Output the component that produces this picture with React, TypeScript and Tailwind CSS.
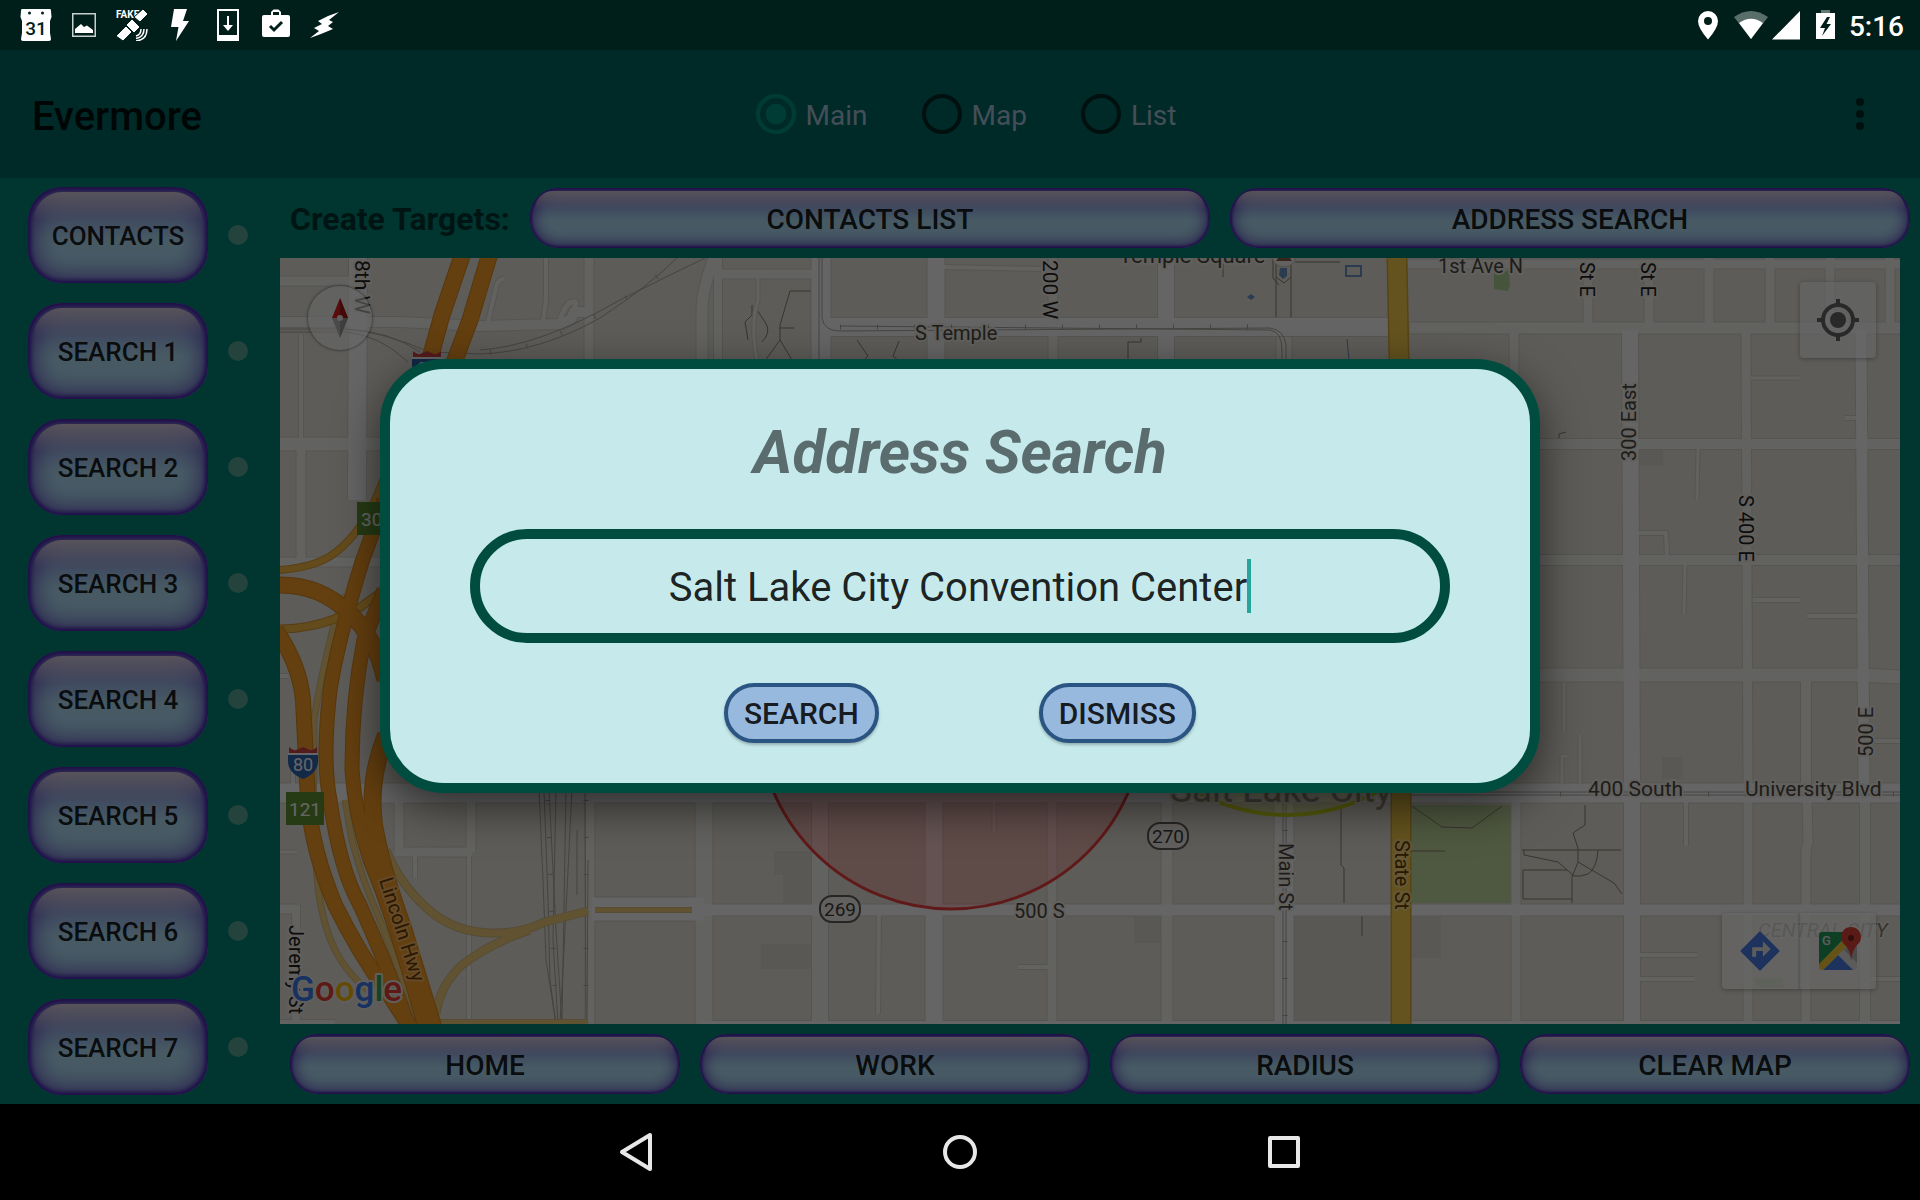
import React, { useState } from "react";

type Road = { d: string; w: number; major?: boolean };

const roads: Road[] = [
  // horizontal streets
  { d: "M280 281H352", w: 9 },
  { d: "M280 322H400L480 326L560 324Q572 322 574 312H586", w: 10 },
  { d: "M280 444H400", w: 13 },
  { d: "M280 562H420", w: 9 },
  { d: "M280 676H288", w: 4 },
  { d: "M280 852H297", w: 3 },
  { d: "M716 274H816", w: 9 },
  { d: "M940 267L1048 269", w: 4 },
  { d: "M1406 264H1900", w: 9 },
  { d: "M1410 328H1900", w: 11 },
  { d: "M1530 444H1900", w: 10 },
  { d: "M1530 560H1900", w: 10 },
  { d: "M1530 675H1860L1900 677", w: 13 },
  { d: "M1751 378H1799", w: 3 },
  { d: "M1845 418H1860", w: 4 },
  { d: "M1639 533H1666L1667 556", w: 4 },
  { d: "M1753 600H1800", w: 4 },
  { d: "M1807 616H1858", w: 4 },
  { d: "M1870 741H1900", w: 4 },
  { d: "M1638 955H1697", w: 4 },
  { d: "M1638 979H1695", w: 4 },
  { d: "M1864 979H1900", w: 4 },
  { d: "M1018 967H1050", w: 4 },
  { d: "M395 852H472", w: 9 },
  { d: "M280 1022H335", w: 4 },
  // vertical streets
  { d: "M301 335V438", w: 4 },
  { d: "M301 450V562", w: 9 },
  { d: "M399 800V852", w: 9 },
  { d: "M471 800V852", w: 9 },
  { d: "M469 852V1024", w: 4 },
  { d: "M415 852V878", w: 4 },
  { d: "M293 770V790", w: 4 },
  { d: "M296 905V1024", w: 8 },
  { d: "M280 909H298", w: 9 },
  { d: "M546 258V300L543 322", w: 4 },
  { d: "M504 279Q497 279 495 292L488 322", w: 4 },
  { d: "M560 320Q565 304 572 302Q580 300 573 310", w: 5 },
  { d: "M589 258V370", w: 9 },
  { d: "M718 258V380", w: 8 },
  { d: "M714 258Q702 290 702 310V370", w: 11 },
  { d: "M758 278V300Q750 325 757 360", w: 3 },
  { d: "M1053 258V370", w: 9 },
  { d: "M1284 337V370", w: 15 },
  { d: "M1588 269V326", w: 9 },
  { d: "M1649 269V326", w: 9 },
  { d: "M1709 258V326", w: 9 },
  { d: "M1770 258V326", w: 9 },
  { d: "M1830 258V326", w: 9 },
  { d: "M1890 258V326", w: 9 },
  { d: "M1514 333V375", w: 9 },
  { d: "M1746 330L1748 790", w: 9 },
  { d: "M1698 449L1697 500", w: 3 },
  { d: "M1685 565L1684 614", w: 3 },
  { d: "M1564 683V731", w: 3 },
  { d: "M1580 735V783", w: 3 },
  { d: "M1567 756H1562V783", w: 3 },
  { d: "M1806 680V783", w: 10 },
  { d: "M820 800V1024", w: 16 },
  { d: "M704 800V1024", w: 17 },
  { d: "M590 800V1024", w: 9 },
  { d: "M1052 800V1024", w: 9 },
  { d: "M1167 800V1024", w: 11 },
  { d: "M994 800V832", w: 3 },
  { d: "M879 910L878 1014", w: 4 },
  { d: "M1516 800V1024", w: 9 },
  { d: "M1686 800V846", w: 4 },
  { d: "M1748 800V1024", w: 9 },
  { d: "M1807 800L1808 842L1806 850V1024", w: 9 },
  { d: "M1865 800V1024", w: 10 },
  // arterials
  { d: "M358 258L357 500", w: 18, major: true },
  { d: "M821 258V370", w: 19, major: true },
  { d: "M936 258V370", w: 17, major: true },
  { d: "M1166 258V370", w: 16, major: true },
  { d: "M822 327H1398", w: 18, major: true },
  { d: "M280 793H1900", w: 19, major: true },
  { d: "M592 909H704", w: 23, major: true },
  { d: "M690 910H1900", w: 11, major: true },
  { d: "M700 1025H1900", w: 8, major: true },
  { d: "M934 800V1024", w: 17, major: true },
  { d: "M1284 800V1024", w: 19, major: true },
  { d: "M1630 330L1632 790V1024", w: 16, major: true },
  { d: "M1861 330L1864 790", w: 11, major: true },
];

const yellowRamps: Road[] = [
  { d: "M345 595L334 625Q320 680 314 720V775Q312 800 316 860Q318 915 335 950Q348 975 368 990", w: 5 },
  { d: "M345 800L352 840Q362 880 378 915L420 1024", w: 5 },
  { d: "M386 850Q400 885 430 911Q455 932 490 933Q520 934 545 922L588 911", w: 7 },
  { d: "M436 1014Q440 985 462 965Q490 943 530 930", w: 7 },
  { d: "M595 910H692", w: 4 },
  { d: "M438 1022H588", w: 4 },
];

const amberRamps: Road[] = [
  { d: "M280 570Q315 567 332 555Q365 532 384 478", w: 6 },
  { d: "M280 629Q310 629 340 617", w: 7 },
  { d: "M355 611L384 590", w: 7 },
];

const highways: Road[] = [
  { d: "M464 250L442 315L424 380", w: 15 },
  { d: "M491 250L470 320L440 400", w: 15 },
  { d: "M384 500Q374 530 362 562Q338 640 330 690Q322 760 330 800Q340 870 360 905Q385 960 408 1024", w: 13 },
  { d: "M280 585Q320 585 348 612Q375 635 385 680", w: 15 },
  { d: "M384 590L364 640Q352 700 352 770Q355 815 370 860Q395 920 420 1010L424 1024", w: 13 },
  { d: "M276 630Q300 665 303 700L308 800Q312 850 335 905Q360 955 386 990L412 1030", w: 14 },
  { d: "M386 735Q368 780 374 825Q382 870 402 925L433 1026", w: 16 },
];

const rails = [
  "M280 329H345Q390 331 420 352M280 332H345Q380 335 408 362M345 329Q380 331 430 352L480 354",
  "M480 354Q540 352 600 318Q650 285 677 258M480 350Q540 346 620 300Q680 270 705 258",
  "M819 258V370M822 258V318Q824 331 840 331L1270 328Q1284 330 1286 345V370M840 326L1270 330Q1282 332 1282 350V370",
  "M1283 800V1024M1286 800V1024M1400 792H1900M1400 795H1900",
  "M539 790L543 880L546 960L556 1024M544 790L548 900L550 980L556 1024M549 790L556 930L562 1024M556 790L553 940L558 1024M566 790L562 1020M572 790L564 950L560 1024M585 790L586 1024M588 860L587 1020M577 830V895",
];

const halo = "[paint-order:stroke] [stroke-width:4px] [stroke-linejoin:round]";

function RoadLayer({ items, casing, fill }: { items: Road[]; casing: string; fill: string }) {
  return (
    <g fill="none" strokeLinejoin="round">
      {items.map((r, i) => (
        <path key={`c${i}`} d={r.d} stroke={casing} strokeWidth={r.w + 2} />
      ))}
      {items.map((r, i) => (
        <path key={`f${i}`} d={r.d} stroke={r.major ? "#fdfdfd" : fill} strokeWidth={r.w} />
      ))}
    </g>
  );
}

function RouteBadge({ x, y, label }: { x: number; y: number; label: string }) {
  return (
    <g>
      <rect x={x - 20} y={y - 13} width="40" height="26" rx="12" fill="#f4f1ea" stroke="#5c5c5c" strokeWidth="2" />
      <text x={x} y={y + 7} textAnchor="middle" fontSize="19" fill="#3c3c3c">{label}</text>
    </g>
  );
}

function Shield({ x, y, label }: { x: number; y: number; label: string }) {
  return (
    <g transform={`translate(${x} ${y})`}>
      <path d="M1 0Q5 4 8 3L15 0L22 3Q25 4 29 0V6H1Z" fill="#d2454a" />
      <path d="M0 8H30V14Q30 26 15 32Q0 26 0 14Z" fill="#2f66b5" />
      <path d="M0 6H30V8H0Z" fill="#fff" />
      <text x="15" y="24" textAnchor="middle" fontSize="18" fill="#fff">{label}</text>
    </g>
  );
}

function CityMap() {
  return (
    <svg
      className="absolute inset-0 size-full font-['Roboto',sans-serif]"
      viewBox="280 258 1620 766"
      preserveAspectRatio="xMidYMid slice"
      role="img"
      aria-label="Map of Salt Lake City"
    >
      <rect x="280" y="258" width="1620" height="766" fill="#e9e5dc" />
      <g fill="#e1dcd1">
        <rect x="761" y="944" width="50" height="25" />
        <rect x="774" y="851" width="37" height="24" />
        <rect x="783" y="875" width="28" height="28" />
        <rect x="1134" y="915" width="27" height="28" />
        <rect x="1411" y="917" width="30" height="41" />
        <rect x="1639" y="450" width="24" height="16" />
        <rect x="1662" y="757" width="21" height="22" />
        <rect x="1294" y="916" width="96" height="104" />
      </g>
      <rect x="1410" y="805" width="101" height="98" fill="#c6dba0" />
      <path d="M1494 271H1509L1510 285L1508 291L1494 289Z" fill="#b0d294" />
      <rect x="1755" y="978" width="28" height="9" fill="#c6dba0" />
      <g fill="none" stroke="#8a8474" strokeWidth="1">
        <path d="M1412 806L1442 827L1472 828L1502 806M1411 851H1445" />
        <path d="M1585 805V825L1573 833L1578 848V862L1572 877V903M1522 850H1621M1524 850V855L1558 862L1574 876Q1580 877 1588 874Q1597 868 1598 850M1578 862L1614 883L1622 894M1523 870H1567M1523 870V899H1572" />
        <path d="M1276 260V317M1291 260V317M1276 277L1284 283L1291 277M1295 262H1340M1223 264V277M1273 258V278L1279 285" />
        <path d="M812 291H790L780 325V340L795 365M780 340L762 365M757 310L765 322Q772 332 762 342M752 305V315L745 322L748 340M780 328H794M755 345V365M857 340L868 356L858 366M899 341L893 356L905 366M1128 365V342H1141V338M1559 439V434L1566 432" />
        <path d="M1341 805V865L1344 868V903M1362 916V936" />
      </g>
      <rect x="1346" y="266" width="15" height="10" fill="none" stroke="#6d94c9" strokeWidth="2" />
      <path d="M1247 297L1251 294L1255 297L1251 300Z" fill="#6d94c9" />
      <path d="M1347 339L1349 360" stroke="#6d94c9" fill="none" />
      <path d="M1280 268H1287V276L1283 279L1279 275Z" fill="#6d94c9" />
      <RoadLayer items={roads} casing="#d8d3c8" fill="#f6f4f0" />
      <g fill="none" stroke="#aeaaa2" strokeWidth="1">
        {rails.map((d) => (
          <path key={d} d={d} />
        ))}
      </g>
      <g stroke="#aeaaa2" strokeWidth="5" fill="none" strokeDasharray="1 36">
        <path d="M840 327H1270M1560 794H1900M548 800L556 1024M586 800V1024M1285 830V1024M490 352Q560 350 677 262" />
      </g>
      <RoadLayer items={yellowRamps} casing="#d5bd86" fill="#f2cf7a" />
      <RoadLayer items={amberRamps} casing="#d99a35" fill="#fbbc48" />
      <RoadLayer items={highways} casing="#d98a20" fill="#f99d27" />
      <path d="M1397 258L1399 360L1401 800V1024" stroke="#d9a93a" strokeWidth="21" fill="none" />
      <path d="M1397 258L1399 360L1401 800V1024" stroke="#fbcf4c" strokeWidth="18" fill="none" />

      <circle cx="1287" cy="628" r="187" fill="#dfe62a" fillOpacity="0.25" stroke="#d5e01c" strokeWidth="4" />
      <circle cx="951" cy="716" r="193" fill="#f00" fillOpacity="0.18" stroke="#f04040" strokeWidth="3" />

      <g fontSize="20" fill="#4d4a44" stroke="#f3f0e9" className={halo}>
        <text x="915" y="340">S Temple</text>
        <text x="1438" y="273">1st Ave N</text>
        <text x="1588" y="796" fontSize="21">400 South</text>
        <text x="1745" y="796" fontSize="21">University Blvd</text>
        <text x="1014" y="918">500 S</text>
        <text x="1119" y="263" fontSize="22">Temple Square</text>
        <text transform="translate(1636 461) rotate(-90)">300 East</text>
        <text transform="translate(1873 757) rotate(-90)">500 E</text>
        <text transform="translate(1279 843) rotate(90)">Main St</text>
        <g fill="#222">
          <text transform="translate(1043 260) rotate(90)" fontSize="21">200 W</text>
          <text transform="translate(355 260) rotate(90)" fontSize="21">8th W</text>
          <text transform="translate(1580 262) rotate(90)">St E</text>
          <text transform="translate(1641 262) rotate(90)">St E</text>
          <text transform="translate(1739 495) rotate(90)">S 400 E</text>
          <text transform="translate(289 925) rotate(90)">Jeremy St</text>
        </g>
        <text transform="translate(1395 840) rotate(90)" fill="#6b3d00" stroke="#fbdc84">State St</text>
        <text transform="translate(379 880) rotate(72)" fill="#6b3d00" stroke="#fbb862">Lincoln Hwy</text>
        <text x="1758" y="937" fontStyle="italic" fill="#8a8270">CENTRAL CITY</text>
      </g>
      <text x="1170" y="802" fontSize="37" fill="#a0957c" stroke="#ece8df" className={halo}>Salt Lake City</text>
      <circle cx="1284" cy="255" r="12" fill="#f6f4f0" stroke="#cbc6bb" />
      <path d="M1276 261L1284 250L1292 261Z" fill="#8d5d4b" />
      <RouteBadge x={840} y={909} label="269" />
      <RouteBadge x={1168} y={836} label="270" />
      <Shield x={288} y={747} label="80" />
      <Shield x={412} y={351} label="80" />
      <g fontSize="19" fill="#fff">
        <rect x="286" y="792" width="38" height="33" fill="#5f9532" />
        <text x="289" y="816">121</text>
        <rect x="357" y="502" width="38" height="33" fill="#5f9532" />
        <text x="361" y="526">305</text>
      </g>
      <text x="291" y="1001" fontSize="35" fontWeight="500" stroke="#efece6" className={halo}>
        <tspan fill="#3b7cf0">G</tspan>
        <tspan fill="#e94235">o</tspan>
        <tspan fill="#fabb05">o</tspan>
        <tspan fill="#3b7cf0">g</tspan>
        <tspan fill="#34a853">l</tspan>
        <tspan fill="#e94235">e</tspan>
      </text>
    </svg>
  );
}

function GlossButton({ children, tall = false }: { children: React.ReactNode; tall?: boolean }) {
  const shape = tall
    ? "h-24 w-[180px] rounded-[34px] text-[26px] shadow-[inset_0_0_4px_3px_#4a1fb4,inset_0_0_20px_9px_rgba(88,62,185,0.7)] before:inset-x-[6px] before:top-[5px] before:h-[28px] before:rounded-t-[28px]"
    : "h-[60px] min-w-0 flex-1 rounded-[28px] text-[28px] shadow-[inset_0_0_3px_2px_#4a1fb4,inset_0_0_13px_6px_rgba(88,62,185,0.7)] before:inset-x-[5px] before:top-[3px] before:h-[18px] before:rounded-t-[22px]";
  return (
    <button
      type="button"
      className={`relative bg-linear-to-b from-[#98a8e8] from-25% via-[#b2e1fa] via-55% to-[#b2e1fa] pt-[3px] font-medium text-black/87 before:absolute before:bg-linear-to-b before:from-[#e6dde6]/90 before:to-[#9a9cd0]/0 before:content-[''] ${shape}`}
    >
      <span className="relative">{children}</span>
    </button>
  );
}

function StatusIcons() {
  return (
    <div className="flex items-center gap-4 text-white">
      <svg className="size-8" viewBox="0 0 32 32" fill="currentColor" aria-hidden="true">
        <path d="M2 0H30Q31 0 31 2L31.500 8L30 12V24L31 30Q31 32 29 32H3Q1 32 1 30L2 24V12L.5 8L1 2Q1 0 2 0Z" />
        <circle cx="9.500" cy="4" r="1.500" fill="#001f1a" />
        <circle cx="22.500" cy="4" r="1.500" fill="#001f1a" />
        <text x="16" y="26" fontSize="19" fontWeight="500" textAnchor="middle" fill="#001f1a">31</text>
      </svg>
      <svg className="size-8" viewBox="0 0 32 32" aria-hidden="true">
        <rect x="4.750" y="4.750" width="22.500" height="22.500" fill="none" stroke="#c8d0ce" strokeWidth="1.500" />
        <path d="M7 24V20L13 15L16 18L19 16.500L25 21V24Z" fill="currentColor" />
      </svg>
      <svg className="size-8" viewBox="0 0 32 32" fill="currentColor" aria-hidden="true">
        <text x="0" y="9" fontSize="10" fontWeight="700">FAKE</text>
        <path d="M18 8L27 0L32 5L24 13ZM10 16L16 10L24 18L18 24ZM0 27L10 17L16 23L7 32Z" stroke="#001f1a" strokeWidth="1" />
        <path d="M20 27Q25 26 25 20M20 29.500Q28 28 28 20M20 32Q31 31 31 20" fill="none" stroke="currentColor" strokeWidth="1.500" />
      </svg>
      <svg className="size-8" viewBox="0 0 32 32" fill="currentColor" aria-hidden="true">
        <path d="M10 0H23L19 12H25L12 32L14.500 18H7Z" />
      </svg>
      <svg className="size-8" viewBox="0 0 32 32" aria-hidden="true">
        <rect x="6" y="1" width="20" height="30" fill="none" stroke="currentColor" strokeWidth="2" />
        <path d="M6 26H26V31H6ZM15 7H17V16H21L16 22L11 16H15Z" fill="currentColor" />
      </svg>
      <svg className="size-8" viewBox="0 0 32 32" aria-hidden="true">
        <path d="M4 6H11V3L13.500 .5H18.500L21 3V6H28Q30 6 30 8V26Q30 28 28 28H4Q2 28 2 26V8Q2 6 4 6ZM13 6H19V3H13Z" fill="currentColor" fillRule="evenodd" />
        <path d="M10 17L14 21L22 13" fill="none" stroke="#001f1a" strokeWidth="3" />
      </svg>
      <svg className="size-8" viewBox="0 0 32 32" fill="currentColor" aria-hidden="true">
        <path d="M31 3L20 7L10 12L14 15L6 19L11 22L2 29L13 25L25 20L20 17L25 13L21 11Z" />
      </svg>
    </div>
  );
}

function StatusBar() {
  return (
    <div className="flex h-[50px] shrink-0 items-center justify-between bg-[#001f1a] pl-5 pr-4 text-white">
      <StatusIcons />
      <div className="flex items-center gap-1">
        <svg className="mr-3 h-[30px] w-5" viewBox="0 0 20 30" fill="currentColor" aria-hidden="true">
          <path fillRule="evenodd" d="M10 1A10 10 0 0 0 0 11Q0 18 10 29.500Q20 18 20 11A10 10 0 0 0 10 1ZM10 7A4 4 0 1 1 10 15A4 4 0 1 1 10 7Z" />
        </svg>
        <svg className="h-[30px] w-[34px]" viewBox="0 0 34 30" aria-hidden="true">
          <path d="M0 7Q17 -5 34 7L17 29Z" fill="#fff" fillOpacity="0.35" />
          <path d="M5 13Q17 4.500 29 13L17 29Z" fill="#fff" />
        </svg>
        <svg className="h-[30px] w-7" viewBox="0 0 28 30" fill="currentColor" aria-hidden="true">
          <path d="M0 29.500L28 1V29.500Z" />
        </svg>
        <svg className="ml-3 mr-[9px] h-[30px] w-5" viewBox="0 0 20 30" aria-hidden="true">
          <path d="M5 0H14V3H5Z" fill="#fff" fillOpacity="0.4" />
          <path d="M0 3H19V29H0ZM11 7L4 18H9L6 26L15 14H10.500L14 7Z" fill="#fff" fillRule="evenodd" />
        </svg>
        <time className="pt-[3px] text-[28px] font-medium leading-8">5:16</time>
      </div>
    </div>
  );
}

const views = ["Main", "Map", "List"];
const searches = ["CONTACTS", "SEARCH 1", "SEARCH 2", "SEARCH 3", "SEARCH 4", "SEARCH 5", "SEARCH 6", "SEARCH 7"];

function Header() {
  return (
    <header className="grid h-32 shrink-0 grid-cols-[1fr_auto_1fr] items-center bg-[#006962] pl-8 pr-5">
      <h1 className="pt-[6px] text-[40px] font-medium text-black/87">Evermore</h1>
      <div role="radiogroup" aria-label="View" className="flex gap-[54px]">
        {views.map((v) => (
          <label key={v} className="flex items-center gap-[10px] text-[28px] text-[#abc4dc]">
            <input
              type="radio"
              name="view"
              defaultChecked={v === "Main"}
              className="size-10 appearance-none rounded-full border-4 border-black/60 checked:border-[#009688] checked:bg-radial checked:from-[#009688] checked:from-45% checked:to-transparent checked:to-45%"
            />
            <span className="pt-[3px]">{v}</span>
          </label>
        ))}
      </div>
      <button type="button" aria-label="More options" className="flex h-20 w-20 items-center justify-center justify-self-end">
        <svg className="h-8 w-2" viewBox="0 0 8 32" fillOpacity="0.6" aria-hidden="true">
          <circle cx="4" cy="4" r="4" />
          <circle cx="4" cy="16" r="4" />
          <circle cx="4" cy="28" r="4" />
        </svg>
      </button>
    </header>
  );
}

function MapPanel() {
  return (
    <div className="relative mr-5 min-h-[766px] flex-1 overflow-hidden">
      <CityMap />
      <button type="button" aria-label="Reset bearing" className="absolute left-7 top-7 size-16 rounded-full bg-white/60 shadow-[0_0_3px_rgba(0,0,0,0.7)]">
        <svg viewBox="0 0 64 64" aria-hidden="true">
          <path d="M32 12L24 32H40Z" fill="#e02020" />
          <path d="M32 12L40 32H32Z" fill="#a81414" />
          <path d="M24 32H40L32 52Z" fill="#b8b8b8" />
          <path d="M32 32H40L32 52Z" fill="#9a9a9a" />
          <circle cx="32" cy="32" r="3" fill="#eee" />
        </svg>
      </button>
      <button type="button" aria-label="My location" className="absolute right-6 top-6 size-[76px] rounded-sm bg-white/60 shadow-[0_1px_4px_rgba(0,0,0,0.3)]">
        <svg viewBox="0 0 76 76" fill="none" stroke="#666" strokeWidth="4" aria-hidden="true">
          <circle cx="38" cy="38" r="15" />
          <path d="M38 17V24M38 52V59M17 38H24M52 38H59" />
          <circle cx="38" cy="38" r="8" fill="#666" stroke="none" />
        </svg>
      </button>
      <div className="absolute bottom-[35px] right-6 flex divide-x-2 divide-black/10 rounded-sm bg-white/70 shadow-[0_1px_4px_rgba(0,0,0,0.3)]">
        <button type="button" aria-label="Directions" className="h-[76px] w-[78px]">
          <svg viewBox="0 0 78 76" aria-hidden="true">
            <path d="M39 19L58 38L39 57L20 38Z" fill="#4a80ea" stroke="#4a80ea" strokeWidth="2" strokeLinejoin="round" />
            <path d="M31 44V34H42V28L50 36L42 44V38H35V44Z" fill="#e8e8e8" />
          </svg>
        </button>
        <button type="button" aria-label="Open in Google Maps" className="h-[76px] w-[76px]">
          <svg viewBox="0 0 76 76" aria-hidden="true">
            <rect x="19" y="19" width="38" height="38" rx="3" fill="#e4e4e4" />
            <path d="M19 54V22Q19 19 22 19H50L19 52Z" fill="#1f9d58" />
            <path d="M38 42L53 57H23Z" fill="#4a80ea" />
            <path d="M19 51L45 25L50 30L23 57Q19 57 19 54Z" fill="#fbce3b" />
            <path d="M50 30L57 24V50L44 37Z" fill="#b9b9b9" />
            <path d="M51 48Q51 38 45 32A10 10 0 1 1 57 32Q52 38 51 48Z" fill="#e2453b" />
            <circle cx="51" cy="25" r="3" fill="#7d231c" />
            <text x="22" y="32" fontSize="13" fontWeight="500" fill="#e8e8e8">G</text>
          </svg>
        </button>
      </div>
    </div>
  );
}

function AddressDialog() {
  const [address, setAddress] = useState("Salt Lake City Convention Center");
  const action =
    "h-[60px] rounded-[30px] border-4 border-[#2a5583] bg-[#98b9de] px-4 pt-[2px] text-[30px] font-medium leading-none text-black/87 shadow-[0_2px_3px_rgba(0,0,0,0.25)]";
  return (
    <div className="absolute inset-0 flex items-center justify-center bg-black/60 px-6 pb-[2px]">
      <form
        role="dialog"
        aria-labelledby="dialog-title"
        onSubmit={(e) => e.preventDefault()}
        className="flex w-full max-w-[1160px] flex-col items-center rounded-[64px] border-10 border-[#004d40] bg-[#c6eaec] px-20 pt-12 pb-10 shadow-[0_14px_44px_rgba(0,0,0,0.55)]"
      >
        <h2 id="dialog-title" className="text-[60px] font-bold italic leading-[72px] text-[#5a6c6d]">
          Address Search
        </h2>
        <div className="mt-10 flex h-[114px] w-full items-center justify-center rounded-[58px] border-10 border-[#004d40]">
          <input
            type="text"
            aria-label="Address"
            value={address}
            onChange={(e) => setAddress(e.target.value)}
            className="field-sizing-content bg-transparent pt-1 text-center text-[40px] leading-[54px] text-black/87 outline-none"
          />
          <span className="h-[54px] w-1 bg-[#26a69a]" />
        </div>
        <div className="mt-10 flex gap-40">
          <button type="submit" className={action}>SEARCH</button>
          <button type="button" className={action}>DISMISS</button>
        </div>
      </form>
    </div>
  );
}

function NavBar() {
  const button = "flex h-24 w-[324px] items-center justify-center text-[#e8e8e8]";
  return (
    <nav className="flex h-24 shrink-0 justify-center bg-black">
      <button type="button" aria-label="Back" className={button}>
        <svg className="size-10" viewBox="0 0 40 40" fill="none" stroke="currentColor" strokeWidth="4" strokeLinejoin="round" aria-hidden="true">
          <path d="M34 3V37L6 20Z" />
        </svg>
      </button>
      <button type="button" aria-label="Home" className={button}>
        <svg className="size-10" viewBox="0 0 40 40" fill="none" stroke="currentColor" strokeWidth="4" aria-hidden="true">
          <circle cx="20" cy="20" r="15" />
        </svg>
      </button>
      <button type="button" aria-label="Recent apps" className={button}>
        <svg className="size-10" viewBox="0 0 40 40" fill="none" stroke="currentColor" strokeWidth="4" strokeLinejoin="round" aria-hidden="true">
          <rect x="6" y="6" width="28" height="28" />
        </svg>
      </button>
    </nav>
  );
}

export default function App() {
  return (
    <div className="flex min-h-screen flex-col bg-black font-['Roboto',sans-serif]">
      <StatusBar />
      <div className="relative flex flex-1 flex-col">
        <Header />
        <main className="flex flex-1 bg-[#008478]">
          <aside className="flex w-[280px] shrink-0 flex-col gap-5 pl-7 pt-[9px]">
            {searches.map((s) => (
              <div key={s} className="flex items-center gap-5">
                <GlossButton tall>{s}</GlossButton>
                <span className="size-5 rounded-full bg-[#5aa89a]" />
              </div>
            ))}
          </aside>
          <section className="flex min-w-0 flex-1 flex-col gap-[10px] py-[10px]">
            <div className="flex items-center gap-5 pl-[10px] pr-[10px]">
              <h2 className="pt-[2px] text-[32px] font-bold leading-10 text-black/60">Create Targets:</h2>
              <GlossButton>CONTACTS LIST</GlossButton>
              <GlossButton>ADDRESS SEARCH</GlossButton>
            </div>
            <MapPanel />
            <div className="flex gap-5 px-[10px]">
              <GlossButton>HOME</GlossButton>
              <GlossButton>WORK</GlossButton>
              <GlossButton>RADIUS</GlossButton>
              <GlossButton>CLEAR MAP</GlossButton>
            </div>
          </section>
        </main>
        <AddressDialog />
      </div>
      <NavBar />
    </div>
  );
}
